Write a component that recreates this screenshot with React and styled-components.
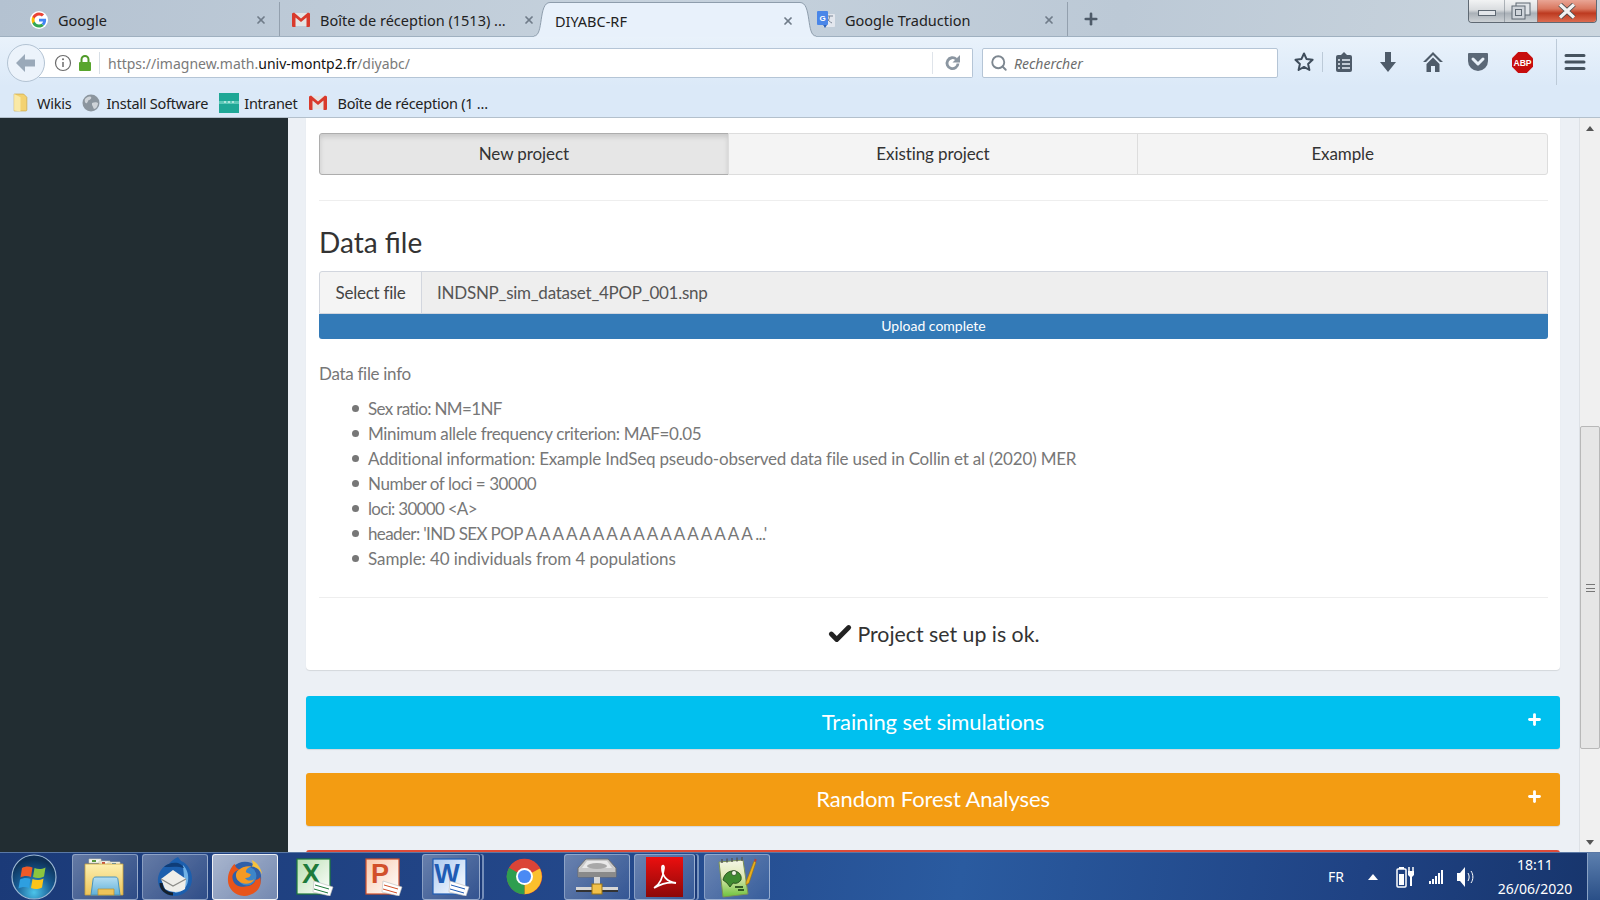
import React from "react";
import styled, { createGlobalStyle } from "styled-components";
import { Check, Plus, Search, X } from "lucide-react";

const GlobalStyle = createGlobalStyle`
  html, body { margin: 0; height: 100%; overflow: hidden; }
  body { font-family: "Noto Sans", "Liberation Sans", sans-serif; color: #333; }
  * { box-sizing: border-box; }
`;

const GoogleG = ({ size = 18 }) => (
  <svg width={size} height={size} viewBox="0 0 48 48">
    <circle cx="24" cy="24" r="24" fill="#fff" />
    <path fill="#4285f4" d="M43 24.500c0-1.400-.1-2.700-.4-4H24v7.600h10.800c-.5 2.500-1.900 4.600-4 6l6.200 4.800C40.700 35.500 43 30.500 43 24.500z" />
    <path fill="#34a853" d="M24 44c5.400 0 9.900-1.800 13-4.900l-6.200-4.800c-1.800 1.200-4 1.900-6.800 1.900-5.200 0-9.600-3.500-11.200-8.200H6.400v5C9.600 39.500 16.300 44 24 44z" />
    <path fill="#fbbc05" d="M12.800 28c-.4-1.200-.6-2.600-.6-4s.2-2.800.6-4v-5H6.400C5.100 17.700 4.300 20.800 4.300 24s.8 6.300 2.100 9z" />
    <path fill="#ea4335" d="M24 11.800c3 0 5.600 1 7.700 3l5.700-5.700C33.900 5.900 29.400 4 24 4 16.300 4 9.600 8.500 6.400 15l6.400 5c1.600-4.700 6-8.200 11.200-8.200z" />
  </svg>
);

const GmailM = () => (
  <svg width="18" height="15" viewBox="0 0 18 15">
    <path fill="#e4e4e4" d="M1 1h16v13H1z" />
    <path fill="#d93a2c" d="M0 1.500 2 .5l7 6 7-6 2 1V14a1 1 0 0 1-1 1h-2.500V5.500L9 10 3.500 5.500V15H1a1 1 0 0 1-1-1z" />
  </svg>
);

const TranslateIcon = () => (
  <svg width="18" height="18" viewBox="0 0 18 18">
    <rect x="6" y="3" width="12" height="13" rx="1" fill="#e3e7ee" />
    <path d="M9 5h7M12.500 5c0 4-2 6-4 7M10 7c1 2.500 3 4 5 5" stroke="#7d8796" strokeWidth="1" fill="none" />
    <rect x="0" y="0" width="11" height="14" rx="1" fill="#4a86e8" />
    <text x="5.500" y="10" fontSize="8" fontWeight="700" fill="#fff" textAnchor="middle" fontFamily="Liberation Sans">G</text>
    <path d="M6 14h4l-2 3z" fill="#2f62b8" />
  </svg>
);

const FolderIcon = () => (
  <svg width="17" height="19" viewBox="0 0 16 18">
    <path d="M2 1h9l3 3v12a1 1 0 0 1-1 1H2z" fill="#f3d271" stroke="#cca94c" strokeWidth=".7" />
    <path d="M2 1l6 3v13.500l-6-1z" fill="#fae9a6" />
  </svg>
);

const GlobeIcon = () => (
  <svg width="18" height="18" viewBox="0 0 18 18">
    <circle cx="9" cy="9" r="8.500" fill="#8b959e" />
    <path d="M3 5c2-2 4-3 6-2 1 1-1 3-2 3s-1 2-2 3-3-1-2-4zM10 9c2-1 5-1 6 0 0 3-2 6-4 6-1-1-1-3-2-4z" fill="#cfd4d9" />
  </svg>
);

const IntranetIcon = () => (
  <svg width="20" height="20" viewBox="0 0 20 20">
    <rect width="20" height="20" fill="#1fa796" />
    <rect y="8" width="20" height="3" fill="#5fc9b9" />
    <path d="M5 9h2M9 9h2M13 9h2" stroke="#fff" strokeWidth="1" />
  </svg>
);

const StarIcon = () => (
  <svg width="22" height="22" viewBox="0 0 22 22">
    <path d="M11 2.500l2.600 5.600 6 .7-4.500 4.100 1.300 6.100-5.400-3.100-5.400 3.100 1.300-6.100-4.500-4.100 6-.7z" fill="none" stroke="#3f4d5c" strokeWidth="2" strokeLinejoin="round" />
  </svg>
);

const ReadingIcon = () => (
  <svg width="20" height="22" viewBox="0 0 20 22">
    <path d="M7 4l3-3 3 3" fill="#4e5b69" />
    <rect x="2" y="4" width="16" height="17" rx="2" fill="#4e5b69" />
    <path d="M4 9h2M8 9h8M4 13h2M8 13h8M4 17h2M8 17h8" stroke="#e8f0f8" strokeWidth="1.500" />
  </svg>
);

const DownloadIcon = () => (
  <svg width="20" height="22" viewBox="0 0 20 22">
    <path d="M7 1h6v10h5l-8 10-8-10h5z" fill="#4e5b69" />
  </svg>
);

const HomeIcon = () => (
  <svg width="22" height="22" viewBox="0 0 22 22">
    <path d="M11 1 1 11h3l7-7 7 7h3z" fill="#4e5b69" />
    <path d="M11 6.500 4.500 13v8H9v-6h4v6h4.500v-8z" fill="#4e5b69" />
  </svg>
);

const PocketIcon = () => (
  <svg width="22" height="20" viewBox="0 0 22 20">
    <path d="M2 1h18a1 1 0 0 1 1 1v7a10 10 0 0 1-20 0V2a1 1 0 0 1 1-1z" fill="#5b6877" />
    <path d="M6 7l5 5 5-5" fill="none" stroke="#e8f0f8" strokeWidth="3" strokeLinecap="round" strokeLinejoin="round" />
  </svg>
);

const AbpIcon = () => (
  <svg width="21" height="21" viewBox="0 0 22 22">
    <path d="M6.500 0h9L22 6.500v9L15.500 22h-9L0 15.500v-9z" fill="#c70d0d" />
    <text x="11" y="14.500" fontSize="9" fontWeight="700" fill="#fff" textAnchor="middle" fontFamily="Liberation Sans">ABP</text>
  </svg>
);

const MenuIcon = () => (
  <svg width="22" height="18" viewBox="0 0 22 18">
    <path d="M2 2.500h18M2 9h18M2 15.500h18" stroke="#46535f" strokeWidth="3" strokeLinecap="round" />
  </svg>
);

const BackIcon = () => (
  <svg width="20" height="18" viewBox="0 0 20 18">
    <path d="M9 0 0 9l9 9v-5.500h10v-7H9z" fill="#9aa9b9" />
  </svg>
);

const InfoIcon = () => (
  <svg width="18" height="18" viewBox="0 0 18 18">
    <circle cx="9" cy="9" r="7.500" fill="none" stroke="#6b6b6b" strokeWidth="1.200" />
    <path d="M9 8v5" stroke="#6b6b6b" strokeWidth="1.500" />
    <circle cx="9" cy="5.300" r="1" fill="#6b6b6b" />
  </svg>
);

const LockIcon = () => (
  <svg width="14" height="16" viewBox="0 0 14 16">
    <path d="M3.500 7V4.500a3.500 3.500 0 0 1 7 0V7" fill="none" stroke="#4f9a28" strokeWidth="2" />
    <rect x="1" y="7" width="12" height="9" rx="1" fill="#58a52d" />
  </svg>
);

const ReloadIcon = () => (
  <svg width="18" height="18" viewBox="0 0 18 18">
    <path d="M14 9.500a5.500 5.500 0 1 1-1.700-4.300" fill="none" stroke="#8b96a1" strokeWidth="2.800" />
    <path d="M16 1v7.500H8.500z" fill="#8b96a1" />
  </svg>
);

const MinimizeGlyph = () => (
  <svg width="18" height="8" viewBox="0 0 18 8">
    <rect x=".5" y=".5" width="17" height="5" fill="#e3e6ea" stroke="#5f6973" />
  </svg>
);

const RestoreGlyph = () => (
  <svg width="20" height="18" viewBox="0 0 20 18">
    <rect x="5" y="1" width="14" height="12" fill="#dfe3e7" stroke="#5f6973" />
    <rect x="1" y="4" width="13" height="13" fill="#cfd4da" stroke="#5f6973" />
    <rect x="4.500" y="7.500" width="6" height="6" fill="none" stroke="#5f6973" />
  </svg>
);

const CloseGlyph = () => (
  <svg width="20" height="16" viewBox="0 0 20 16">
    <path d="M3 1.500 17 14.500M17 1.500 3 14.500" stroke="#4b4b4b" strokeWidth="5" />
    <path d="M3 1.500 17 14.500M17 1.500 3 14.500" stroke="#f2f2f2" strokeWidth="3.200" />
  </svg>
);

// flared bottom corner of the selected browser tab
const TabCurve = () => (
  <svg width="16" height="35" viewBox="0 0 16 35">
    <path d="M16 .5C4 .5 10 34 0 34v1h16z" fill="#e8f1fb" />
    <path d="M16 .5C4 .5 10 34 0 34" fill="none" stroke="#8e9dac" />
  </svg>
);

const WindowsOrb = () => (
  <svg width="46" height="46" viewBox="0 0 46 46">
    <defs>
      <radialGradient id="orb" cx="50%" cy="85%" r="75%">
        <stop offset="0" stopColor="#4cc4ea" />
        <stop offset=".55" stopColor="#175a92" />
        <stop offset="1" stopColor="#0e2f55" />
      </radialGradient>
    </defs>
    <circle cx="23" cy="23" r="22" fill="url(#orb)" stroke="#9db9d4" strokeWidth="1.200" />
    <path d="M11 14c3.500-2 7-2 10.500-.5L20 23c-3.500-1.500-7-1.500-10.500 .5z" fill="#ef5a27" />
    <path d="M23.500 14c3.500 1.500 7 1.500 11-.5L33 22.500c-4 2-7.500 2-11 .5z" fill="#8cc63f" />
    <path d="M9 25.500c3.500-2 7-2 10.500-.5L18 34c-3.500-1.500-7-1.500-10.500 .5z" fill="#2e9fe0" />
    <path d="M21.500 25c3.500 1.500 7 1.500 11-.5L31 33.500c-4 2-7.500 2-11 .5z" fill="#fcc419" />
  </svg>
);

const ExplorerIcon = () => (
  <svg width="42" height="42" viewBox="0 0 42 42">
    <defs>
      <linearGradient id="fold" x1="0" y1="0" x2="0" y2="1">
        <stop offset="0" stopColor="#fdf0b0" />
        <stop offset="1" stopColor="#edc45a" />
      </linearGradient>
      <linearGradient id="win" x1="0" y1="0" x2="0" y2="1">
        <stop offset="0" stopColor="#b5def2" />
        <stop offset="1" stopColor="#5fb0d8" />
      </linearGradient>
    </defs>
    <path d="M5 3h12v4H5zM15 5h11v4H15zM24 6h12v4H24z" fill="#f7f7f2" stroke="#c9c9a8" strokeWidth=".6" />
    <path d="M8 4h4v2H8z" fill="#5a9a3d" />
    <path d="M18 6h3v2h-3z" fill="#c94f3d" />
    <path d="M28 7h4v2h-4z" fill="#3a86c8" />
    <path d="M1 8h38v31H1z" fill="url(#fold)" stroke="#c9a23e" strokeWidth=".8" />
    <path d="M7 39l2-15c0-2 1-3 3-3h19c2 0 3 1 3 3l2 15z" fill="url(#win)" stroke="#4a94bd" />
    <path d="M14 39v-6h16v6z" fill="#edc45a" stroke="#b98f2f" strokeWidth=".7" />
  </svg>
);

const ThunderbirdIcon = () => (
  <svg width="38" height="40" viewBox="0 0 38 40">
    <path d="M22 0c-4 2-7 4-9 7-5 1-10 7-11 14-1 8 5 18 16 18 10 0 18-7 18-17C36 13 31 6 25 4z" fill="#1c5fae" />
    <path d="M27 8c4 4 6 10 5 16-1 7-7 12-14 12 6-3 10-8 10-15 0-5-1-9-1-13z" fill="#6fb1e6" />
    <path d="M8 10c3-3 8-5 14-4 3 1 5 3 6 5-6-2-13-1-20-1z" fill="#0f3d78" />
    <path d="M5 22l12-9 13 9-1 10c-5 4-14 4-20 0z" fill="#efeee9" />
    <path d="M5 22l12 7 13-7" fill="none" stroke="#8c8c88" strokeWidth="1.300" />
    <path d="M5 26c0 6 5 11 12 11" fill="none" stroke="#16202c" strokeWidth="3" />
  </svg>
);

const FirefoxIcon = () => (
  <svg width="38" height="40" viewBox="0 0 40 42">
    <circle cx="20" cy="22" r="17" fill="#2f5fa8" />
    <circle cx="22" cy="20" r="10" fill="#3d86c9" />
    <path d="M9 7c1 4 3 5 5 6-6 2-8 6-7 10 1 6 7 9 13 8 6 0 10-3 11-7 1 0 4-1 5-3 1 5 1 9-3 14-4 4-9 6-14 6C9 41 2 33 2 24 2 17 5 11 9 7z" fill="#e8541a" />
    <path d="M14 13c4-3 9-4 13-3-5 1-6 4-6 6l5 2c0 3-3 4-6 4 2 3 6 4 10 1-3 6-12 7-17 2-4-4-3-10 1-12z" fill="#f59a23" />
    <path d="M27 3c6 3 10 9 11 15-2-5-7-8-11-8 2-2 1-5 0-7z" fill="#f7c23c" />
  </svg>
);

const OfficeIcon = ({ letter, color, light }) => (
  <svg width="38" height="38" viewBox="0 0 38 38">
    <defs>
      <linearGradient id={`doc${letter}`} x1="0" y1="0" x2="1" y2="1">
        <stop offset="0" stopColor={light} />
        <stop offset="1" stopColor="#fff" />
      </linearGradient>
    </defs>
    <rect x="1" y="1" width="33" height="35" fill={`url(#doc${letter})`} stroke={color} strokeWidth="1.200" />
    <text x="15" y="25" fontSize="27" fontWeight="700" fill={color} textAnchor="middle" fontFamily="Liberation Sans">{letter}</text>
    <path d="M18 23l19 6-3 9-17-4z" fill="#fff" stroke="#bbb" strokeWidth=".6" />
    <path d="M19 27l14 4M18 31l14 4" stroke={color} strokeWidth="1" />
  </svg>
);

const ChromeIcon = () => (
  <svg width="37" height="37" viewBox="0 0 48 48">
    <circle cx="24" cy="24" r="23" fill="#db4437" />
    <path d="M24 24 44 13.500A23 23 0 0 1 24 47z" fill="#fbc02d" />
    <path d="M24 24 24 47A23 23 0 0 1 4 12.500z" fill="#2e9e4f" />
    <path d="M4 12.500A23 23 0 0 1 44 13.500H24z" fill="#db4437" />
    <circle cx="24" cy="24" r="11" fill="#fff" />
    <circle cx="24" cy="24" r="8.500" fill="#4a8af4" />
  </svg>
);

const DriveIcon = () => (
  <svg width="42" height="38" viewBox="0 0 42 38">
    <path d="M10 1h22l8 9v9H2v-9z" fill="#c9c9c9" stroke="#6e6e6e" />
    <path d="M11 3h20l5 7H6z" fill="#e9e9e9" />
    <ellipse cx="21" cy="8" rx="10" ry="3" fill="#a8a8a8" />
    <rect x="2" y="14" width="38" height="5" fill="#8a8a8a" />
    <rect x="18" y="19" width="6" height="9" fill="#d8d8d8" />
    <rect x="0" y="29" width="42" height="3" fill="#d6d6d6" />
    <rect x="0" y="32" width="42" height="2" fill="#333" />
    <rect x="16" y="26" width="10" height="10" fill="#f2c14a" stroke="#9a7417" />
  </svg>
);

const AcrobatIcon = () => (
  <svg width="37" height="40" viewBox="0 0 37 40">
    <defs>
      <linearGradient id="pdf" x1="0" y1="0" x2="0" y2="1">
        <stop offset="0" stopColor="#ec0f0f" />
        <stop offset="1" stopColor="#8c0808" />
      </linearGradient>
    </defs>
    <rect width="37" height="40" fill="url(#pdf)" />
    <path d="M8 31c5-3 9-10 10-20 .2-3-2-3-2 0 0 8 5 14 14 15-6-1-15 1-22 5z" fill="none" stroke="#fff" strokeWidth="1.800" />
  </svg>
);

const NotepadIcon = () => (
  <svg width="40" height="42" viewBox="0 0 40 42">
    <defs>
      <linearGradient id="npp" x1="0" y1="0" x2="0" y2="1">
        <stop offset="0" stopColor="#f4f6e6" />
        <stop offset=".45" stopColor="#dfe9b4" />
        <stop offset="1" stopColor="#6dc23c" />
      </linearGradient>
    </defs>
    <path d="M2 6l24-2 5 34-25 3z" fill="url(#npp)" stroke="#7d9352" />
    <path d="M5 7V3M10 6.500V2.500M15 6V2M20 5.500V1.500M25 5V1" stroke="#555" strokeWidth="1.400" />
    <path d="M6 24c1-6 6-10 12-9 5 1 7 5 6 9-2 3-5 4-8 3l-3 4-3-4z" fill="#3f8a2f" stroke="#17380f" strokeWidth=".7" />
    <circle cx="17" cy="17" r="2.500" fill="#f4f6e6" stroke="#17380f" strokeWidth=".7" />
    <path d="M18 31h8M21 34h6" stroke="#12340c" strokeWidth="1.500" />
    <path d="M29 26 37 5l2 1-7 21-3 2z" fill="#e9ae1d" stroke="#96710f" strokeWidth=".6" />
    <path d="M37 5l.7-2.500 2 1L39 6z" fill="#b5423a" />
  </svg>
);

const BatteryIcon = () => (
  <svg width="20" height="22" viewBox="0 0 20 22">
    <rect x="1" y="3" width="9" height="18" rx="1" fill="none" stroke="#fff" strokeWidth="1.500" />
    <rect x="3" y="1" width="5" height="2" fill="#fff" />
    <rect x="3" y="8" width="5" height="11" fill="#fff" />
    <path d="M13 1v4M17 1v4" stroke="#fff" strokeWidth="1.500" />
    <path d="M12 5h6v4l-2 2v9h-2v-9l-2-2z" fill="#fff" />
  </svg>
);

const SignalIcon = () => (
  <svg width="16" height="16" viewBox="0 0 16 16">
    <path d="M1 12h2v3H1zM4 10h2v5H4zM7 7h2v8H7zM10 4h2v11h-2zM13 1h2v14h-2z" fill="#fff" />
  </svg>
);

const VolumeIcon = () => (
  <svg width="20" height="24" viewBox="0 0 20 24">
    <path d="M1 8h3l5-6v20l-5-6H1z" fill="#fff" />
    <path d="M12 8c1.500 2.500 1.500 5.500 0 8M15 6c2.500 3.500 2.500 8.500 0 12" stroke="#fff" fill="none" />
  </svg>
);

const tabs = [
  { width: 260, title: "Google", icon: <GoogleG />, divided: true },
  { width: 264, pad: 12, right: 8, title: "Boîte de réception (1513) ...", icon: <GmailM /> },
  { width: 250, pad: 5, right: 6, title: "DIYABC-RF", active: true },
  { width: 253, pad: 2, title: "Google Traduction", icon: <TranslateIcon />, divided: true },
];

const bookmarks = [
  { title: "Wikis", icon: <FolderIcon />, gap: 8 },
  { title: "Install Software", icon: <GlobeIcon />, gap: 6 },
  { title: "Intranet", icon: <IntranetIcon />, gap: 5 },
  { title: "Boîte de réception (1 ...", icon: <GmailM />, gap: 11 },
];

// the original's Source Sans runs narrower on capitals and digits than Lato does
const infoLines = [
  { text: "Sex ratio: NM=1NF", spacing: -0.65 },
  { text: "Minimum allele frequency criterion: MAF=0.05", spacing: -0.35 },
  { text: "Additional information: Example IndSeq pseudo-observed data file used in Collin et al (2020) MER", spacing: -0.19 },
  { text: "Number of loci = 30000", spacing: -0.45 },
  { text: "loci: 30000 <A>", spacing: -0.7 },
  { text: "header: 'IND SEX POP A A A A A A A A A A A A A A A A A ...'", spacing: -0.62 },
  { text: "Sample: 40 individuals from 4 populations", spacing: -0.08 },
];

const tasks = [
  { icon: <ExplorerIcon />, width: 66, boxed: true },
  { icon: <ThunderbirdIcon />, width: 66, boxed: true },
  { icon: <FirefoxIcon />, width: 66, boxed: true, active: true },
  { icon: <OfficeIcon letter="X" color="#1d7a3a" light="#b8dfb0" />, width: 65 },
  { icon: <OfficeIcon letter="P" color="#d2502a" light="#f9c9ac" />, width: 65 },
  { icon: <OfficeIcon letter="W" color="#1f5cb4" light="#a9c8f0" />, width: 58, left: 2, boxed: true, stacked: true },
  { icon: <ChromeIcon />, width: 65, left: 8 },
  { icon: <DriveIcon />, width: 66, left: 3, boxed: true },
  { icon: <AcrobatIcon />, width: 61, boxed: true, stacked: true },
  { icon: <NotepadIcon />, width: 66, left: 5, boxed: true },
];

export default function App() {
  return (
    <Screen>
      <GlobalStyle />
      <TabStrip>
        {tabs.map((t) => (
          <Tab
            key={t.title}
            $width={t.width}
            $active={t.active}
            $pad={t.pad}
            $right={t.right}
            $divided={t.divided}
          >
            {t.active && <CurveLeft><TabCurve /></CurveLeft>}
            {t.active && <CurveRight><TabCurve /></CurveRight>}
            {t.icon && <TabIcon>{t.icon}</TabIcon>}
            <TabTitle>{t.title}</TabTitle>
            <TabClose><X size={12} strokeWidth={3.5} /></TabClose>
          </Tab>
        ))}
        <NewTab><Plus size={18} strokeWidth={3.5} /></NewTab>
        <WindowButtons>
          <WinButton $width={35}><MinimizeGlyph /></WinButton>
          <WinButton $width={33}><RestoreGlyph /></WinButton>
          <WinButton $width={59} $close><CloseGlyph /></WinButton>
        </WindowButtons>
      </TabStrip>

      <NavBar>
        <BackButton><BackIcon /></BackButton>
        <UrlBar>
          <InfoIcon />
          <LockIcon />
          <UrlDivider />
          <UrlText>
            https://imagnew.math.<strong>univ-montp2.fr</strong>/diyabc/
          </UrlText>
          <ReloadBox><ReloadIcon /></ReloadBox>
        </UrlBar>
        <SearchBar>
          <Search size={18} strokeWidth={2.5} color="#7d8790" />
          <em>Rechercher</em>
        </SearchBar>
        <ToolIcons>
          <ToolIcon $width={36}><StarIcon /></ToolIcon>
          <ToolSep />
          <ToolIcon $width={42}><ReadingIcon /></ToolIcon>
          <ToolIcon $width={45}><DownloadIcon /></ToolIcon>
          <ToolIcon $width={45}><HomeIcon /></ToolIcon>
          <ToolIcon $width={45}><PocketIcon /></ToolIcon>
          <ToolIcon $width={45}><AbpIcon /></ToolIcon>
          <ToolSep $tall />
          <ToolIcon $width={36}><MenuIcon /></ToolIcon>
        </ToolIcons>
      </NavBar>

      <BookmarkBar>
        {bookmarks.map((b) => (
          <Bookmark key={b.title} $gap={b.gap}>
            {b.icon}
            <span>{b.title}</span>
          </Bookmark>
        ))}
      </BookmarkBar>

      <Main>
        <Sidebar />
        <Content>
          <Card>
            <ModeTabs>
              <ModeTab $active>New project</ModeTab>
              <ModeTab>Existing project</ModeTab>
              <ModeTab>Example</ModeTab>
            </ModeTabs>
            <Rule $top={25} />
            <Heading>Data file</Heading>
            <FileGroup>
              <FileButton>Select file</FileButton>
              <FileName>INDSNP_sim_dataset_4POP_001.snp</FileName>
            </FileGroup>
            <Progress>Upload complete</Progress>
            <InfoTitle>Data file info</InfoTitle>
            <InfoList>
              {infoLines.map((line) => (
                <InfoItem key={line.text} $spacing={line.spacing}>{line.text}</InfoItem>
              ))}
            </InfoList>
            <Rule $top={26} />
            <Status>
              <Check size={26} strokeWidth={4.5} color="#222" />
              Project set up is ok.
            </Status>
          </Card>
          <SectionBar $color="#00c0ef">
            Training set simulations
            <SectionPlus><Plus size={17} strokeWidth={4} /></SectionPlus>
          </SectionBar>
          <SectionBar $color="#f39c12">
            Random Forest Analyses
            <SectionPlus><Plus size={17} strokeWidth={4} /></SectionPlus>
          </SectionBar>
          <NextBox />
        </Content>
        <Scrollbar>
          <ScrollArrow $up />
          <ScrollTrack><ScrollThumb><ThumbGrip /></ScrollThumb></ScrollTrack>
          <ScrollArrow />
        </Scrollbar>
      </Main>

      <Taskbar>
        <StartOrb><WindowsOrb /></StartOrb>
        {tasks.map((t, i) => (
          <TaskButton
            key={i}
            $width={t.width}
            $left={t.left}
            $boxed={t.boxed}
            $active={t.active}
            $stacked={t.stacked}
          >
            {t.icon}
          </TaskButton>
        ))}
        <Tray>
          <Lang>FR</Lang>
          <TrayArrow />
          <BatteryIcon />
          <SignalIcon />
          <VolumeIcon />
          <Clock>
            <span>18:11</span>
            <span>26/06/2020</span>
          </Clock>
          <ShowDesktop />
        </Tray>
      </Taskbar>
    </Screen>
  );
}

const Screen = styled.div`
  width: 1600px;
  height: 900px;
  display: flex;
  flex-direction: column;
  overflow: hidden;
`;

const TabStrip = styled.div`
  position: relative;
  height: 37px;
  flex: none;
  display: flex;
  padding: 2px 0 0 20px;
  background: linear-gradient(100deg, #b4c2d1 0%, #c6d2dd 40%, #bcc9d6 70%, #cbd6df 100%);
  border-bottom: 1px solid #9fb0c0;
`;

const Tab = styled.div`
  position: relative;
  width: ${(p) => p.$width}px;
  flex: none;
  display: flex;
  align-items: center;
  padding: 1px ${(p) => p.$right ?? 12}px 0 ${(p) => p.$pad ?? 10}px;
  gap: 10px;
  font-size: 14.5px;
  color: #222;
  border-right: 1px solid ${(p) => (p.$divided ? "#93a0ae" : "transparent")};
  ${(p) =>
    p.$active &&
    `
    margin: 0 15px -1px 6px;
    background: #e8f1fb;
    border: none;
    border-top: 1px solid #8e9dac;
    z-index: 1;
  `}
`;

const CurveLeft = styled.span`
  position: absolute;
  left: -16px;
  top: -1px;
  display: flex;
`;

const CurveRight = styled(CurveLeft)`
  left: auto;
  right: -16px;
  transform: scaleX(-1);
`;

const TabIcon = styled.span`
  display: flex;
  flex: none;
`;

const TabTitle = styled.span`
  flex: 1;
  white-space: nowrap;
`;

const TabClose = styled.span`
  display: flex;
  color: #707c89;
`;

const NewTab = styled.span`
  display: flex;
  align-items: center;
  padding-left: 14px;
  color: #4e5b69;
`;

const WindowButtons = styled.div`
  position: absolute;
  top: 0;
  right: 3px;
  height: 23px;
  display: flex;
  border: 1px solid #5f6973;
  border-top: none;
  border-radius: 0 0 4px 4px;
  overflow: hidden;
`;

const WinButton = styled.div`
  width: ${(p) => p.$width}px;
  display: flex;
  align-items: center;
  justify-content: center;
  border-left: 1px solid rgba(110, 120, 130, 0.5);
  &:first-child { border-left: none; align-items: flex-end; padding-bottom: 4px; }
  background: ${(p) =>
    p.$close
      ? "linear-gradient(#e9a595, #d9775f 40%, #bd3a20 60%, #dc6b4f)"
      : "linear-gradient(#f2f3f4, #d9dcdf 45%, #a9b0b7 60%, #cdd2d6)"};
`;

const NavBar = styled.div`
  height: 49px;
  flex: none;
  display: flex;
  align-items: center;
  padding: 3px 0 0 7px;
  background: linear-gradient(#e9f2fb, #dbe9f8);
`;

const BackButton = styled.div`
  width: 38px;
  height: 38px;
  flex: none;
  display: flex;
  align-items: center;
  justify-content: center;
  border-radius: 50%;
  background: #ecf3fb;
  border: 1px solid #b3c3d3;
  z-index: 1;
`;

const UrlBar = styled.div`
  width: 934px;
  height: 30px;
  margin-left: -6px;
  display: flex;
  align-items: center;
  gap: 6px;
  padding-left: 15px;
  background: #fff;
  border: 1px solid #b5c5d6;
  border-left: none;
  border-radius: 0 2px 2px 0;
`;

const UrlDivider = styled.span`
  width: 1px;
  height: 22px;
  margin-left: 1px;
  background: #d8dfe6;
`;

const UrlText = styled.span`
  flex: 1;
  padding-left: 2px;
  font-size: 14px;
  color: #7a7a7a;
  strong { font-weight: 400; color: #111; }
`;

const ReloadBox = styled.span`
  width: 40px;
  height: 22px;
  display: flex;
  align-items: center;
  justify-content: center;
  border-left: 1px solid #dfe4ea;
`;

const SearchBar = styled.div`
  width: 296px;
  height: 30px;
  margin-left: 9px;
  display: flex;
  align-items: center;
  gap: 6px;
  padding-left: 7px;
  background: #fff;
  border: 1px solid #b5c5d6;
  border-radius: 2px;
  em { font-size: 14px; color: #6d6d6d; }
`;

const ToolIcons = styled.div`
  display: flex;
  align-items: center;
  height: 100%;
  margin: -2px 0 0 8px;
`;

const ToolIcon = styled.span`
  width: ${(p) => p.$width}px;
  display: flex;
  justify-content: center;
`;

const ToolSep = styled.span`
  width: 1px;
  height: ${(p) => (p.$tall ? 46 : 20)}px;
  margin-left: ${(p) => (p.$tall ? 11 : 0)}px;
  background: #bccad8;
`;

const BookmarkBar = styled.div`
  height: 32px;
  flex: none;
  display: flex;
  align-items: center;
  gap: 11px;
  padding: 2px 0 0 12px;
  font-size: 14.5px;
  letter-spacing: -0.25px;
  color: #222;
  background: #dbe9f8;
  border-bottom: 1px solid #b3c0cc;
`;

const Bookmark = styled.div`
  display: flex;
  align-items: center;
  gap: ${(p) => p.$gap}px;
  white-space: nowrap;
`;

const Main = styled.div`
  flex: 1;
  min-height: 0;
  display: flex;
  font-family: "Lato", "Liberation Sans", sans-serif;
  background: #ecf0f5;
`;

const Sidebar = styled.div`
  width: 288px;
  flex: none;
  background: #222d32;
`;

const Content = styled.div`
  flex: 1;
  min-width: 0;
  padding: 0 19px 0 18px;
  display: flex;
  flex-direction: column;
  gap: 24px;
  overflow: hidden;
  border-right: 1px solid #dde1e6;
`;

const Card = styled.div`
  flex: none;
  margin-bottom: 2px;
  padding: 15px 12px 0 13px;
  background: #fff;
  border-radius: 0 0 4px 4px;
  box-shadow: 0 1px 1px rgba(0, 0, 0, 0.1);
`;

const ModeTabs = styled.div`
  display: grid;
  grid-template-columns: repeat(3, 1fr);
`;

const ModeTab = styled.div`
  height: 42px;
  padding-bottom: 1px;
  display: flex;
  align-items: center;
  justify-content: center;
  font-size: 17px;
  letter-spacing: -0.1px;
  color: #333;
  margin-left: -1px;
  background: ${(p) => (p.$active ? "#e6e6e6" : "#f4f4f4")};
  border: 1px solid ${(p) => (p.$active ? "#adadad" : "#ddd")};
  box-shadow: ${(p) => (p.$active ? "inset 0 3px 5px rgba(0,0,0,.125)" : "none")};
  &:first-child { margin-left: 0; border-radius: 3px 0 0 3px; }
  &:last-child { border-radius: 0 3px 3px 0; }
`;

const Rule = styled.hr`
  margin: ${(p) => p.$top}px 0 0;
  border: none;
  border-top: 1px solid #eee;
`;

const Heading = styled.h3`
  margin: 21px 0 9px;
  font-size: 28px;
  line-height: 40px;
  font-weight: 400;
  color: #333;
`;

const FileGroup = styled.div`
  height: 43px;
  display: flex;
  font-size: 17px;
  letter-spacing: -0.25px;
`;

const FileButton = styled.div`
  width: 103px;
  display: flex;
  align-items: center;
  justify-content: center;
  color: #444;
  background: #f4f4f4;
  border: 1px solid #d2d6de;
  border-radius: 3px 0 0 0;
`;

const FileName = styled.div`
  flex: 1;
  padding-left: 15px;
  display: flex;
  align-items: center;
  margin-left: -1px;
  color: #555;
  background: #eee;
  border: 1px solid #d2d6de;
`;

const Progress = styled.div`
  height: 25px;
  padding-bottom: 2px;
  display: flex;
  align-items: center;
  justify-content: center;
  font-size: 14px;
  color: #fff;
  background: #337ab7;
  border-radius: 0 0 3px 3px;
`;

const InfoTitle = styled.div`
  margin-top: 22px;
  font-size: 17px;
  letter-spacing: -0.3px;
  line-height: 25px;
  color: #777;
`;

const InfoList = styled.ul`
  margin: 10px 0 0;
  padding: 0 0 0 33px;
  list-style: none;
  font-size: 17px;
  line-height: 25px;
  color: #777;
`;

const InfoItem = styled.li`
  display: flex;
  align-items: center;
  gap: 9px;
  white-space: pre;
  letter-spacing: ${(p) => p.$spacing}px;
  &::before {
    content: "";
    width: 7px;
    height: 7px;
    border-radius: 50%;
    background: #777;
  }
`;

const Status = styled.div`
  height: 72px;
  padding-bottom: 1px;
  display: flex;
  align-items: center;
  justify-content: center;
  gap: 4px;
  font-size: 21.3px;
  color: #333;
`;

const SectionBar = styled.div`
  position: relative;
  height: 53px;
  padding-bottom: 2px;
  flex: none;
  display: flex;
  align-items: center;
  justify-content: center;
  font-size: 22px;
  letter-spacing: -0.1px;
  color: #fff;
  background: ${(p) => p.$color};
  border-radius: 3px;
  box-shadow: 0 1px 1px rgba(0, 0, 0, 0.1);
`;

const SectionPlus = styled.span`
  position: absolute;
  top: 15px;
  right: 17px;
  display: flex;
`;

const NextBox = styled.div`
  height: 40px;
  flex: none;
  background: #fff;
  border-top: 2px solid #dd4b39;
  border-radius: 3px 3px 0 0;
`;

const Scrollbar = styled.div`
  width: 20px;
  flex: none;
  display: flex;
  flex-direction: column;
  background: #f0f0f0;
`;

const ScrollArrow = styled.div`
  height: 20px;
  flex: none;
  display: flex;
  align-items: center;
  justify-content: center;
  &::after {
    content: "";
    border-left: 4px solid transparent;
    border-right: 4px solid transparent;
    ${(p) => (p.$up ? "border-bottom: 5px solid #555;" : "border-top: 5px solid #555;")}
  }
`;

const ScrollTrack = styled.div`
  flex: 1;
  display: flex;
  flex-direction: column;
  padding: 288px 0 80px;
`;

const ScrollThumb = styled.div`
  height: 323px;
  flex: none;
  display: flex;
  align-items: center;
  justify-content: center;
  background: #e6e6e6;
  border: 1px solid #b8b8b8;
  border-radius: 2px;
`;

const ThumbGrip = styled.span`
  width: 9px;
  height: 8px;
  border-top: 1px solid #777;
  border-bottom: 1px solid #777;
  background: linear-gradient(transparent 3px, #777 3px, #777 4px, transparent 4px);
`;

const Taskbar = styled.div`
  height: 48px;
  flex: none;
  display: flex;
  align-items: center;
  padding-left: 11px;
  gap: 4px;
  background: linear-gradient(100deg, #1b3a78 0%, #24498c 40%, #2a5ba0 60%, #1f4283 85%, #17356c 100%);
  border-top: 1px solid #5a78a5;
`;

const StartOrb = styled.div`
  width: 57px;
  flex: none;
  display: flex;
`;

const TaskButton = styled.div`
  width: ${(p) => p.$width}px;
  height: 46px;
  flex: none;
  margin-left: ${(p) => p.$left ?? 0}px;
  display: flex;
  align-items: center;
  justify-content: center;
  border-radius: 3px;
  ${(p) =>
    p.$boxed &&
    `
    background: linear-gradient(135deg, rgba(255,255,255,.32), rgba(255,255,255,.08));
    border: 1px solid rgba(200,215,235,.55);
  `}
  ${(p) =>
    p.$active &&
    `
    background: linear-gradient(135deg, rgba(255,255,255,.62), rgba(255,255,255,.38));
    border-color: rgba(255,255,255,.85);
  `}
  ${(p) => p.$stacked && "box-shadow: 2px 0 0 #1b3a78, 4px 0 0 rgba(200,215,235,.5);"}
`;

const Tray = styled.div`
  margin-left: auto;
  height: 100%;
  display: flex;
  align-items: center;
  color: #fff;
  gap: 12px;
`;

const Lang = styled.span`
  font-size: 14px;
  margin-right: 12px;
`;

const TrayArrow = styled.span`
  margin-right: 6px;
  border-left: 5px solid transparent;
  border-right: 5px solid transparent;
  border-bottom: 6px solid #fff;
`;

const Clock = styled.div`
  width: 104px;
  margin-left: -5px;
  display: flex;
  flex-direction: column;
  align-items: center;
  font-size: 14px;
  line-height: 24px;
`;

const ShowDesktop = styled.span`
  width: 13px;
  height: 100%;
  margin-left: -12px;
  background: linear-gradient(#5c7fae, #2a4f87);
  border-left: 1px solid #8aa3c5;
`;
